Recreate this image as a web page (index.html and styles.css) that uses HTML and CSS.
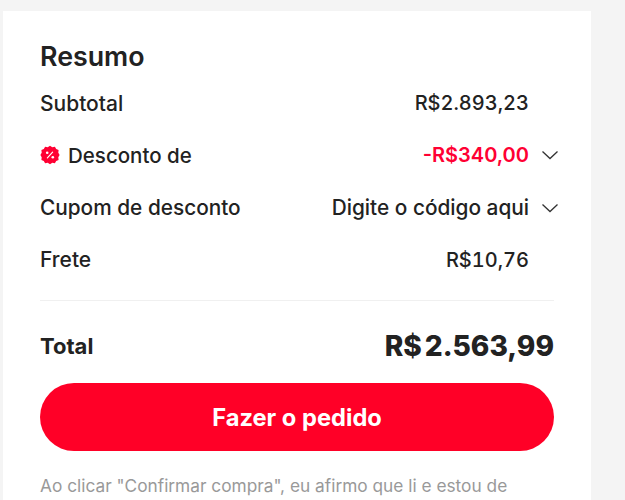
FILE: index.html
```html
<!DOCTYPE html>
<html lang="pt-BR">
<head>
    <meta charset="UTF-8">
    <meta name="viewport" content="width=device-width, initial-scale=1.0">
    <title>Resumo</title>
    <link rel="stylesheet" href="styles.css">
</head>
<body>
    <div class="summary">
        <h1 class="summary-title">Resumo</h1>
        <div class="row">
            <span class="row-label">Subtotal</span>
            <span class="row-value">R$2.893,23</span>
            <span class="row-arrow"></span>
        </div>
        <div class="row">
            <span class="row-label row-label-small">
                <svg class="badge" viewBox="0 0 20 20" width="20" height="20">
                    <path fill="#ff0033" d="M10 .8l2.3 1.4 2.6-.4 1.3 2.3 2.4 1-.3 2.7L19.6 10l-1.3 2.2.3 2.7-2.4 1-1.3 2.3-2.6-.4L10 19.2l-2.3-1.4-2.6.4-1.3-2.3-2.4-1 .3-2.7L.4 10l1.3-2.2-.3-2.7 2.4-1 1.3-2.3 2.6.4z"/>
                    <path stroke="#fff" stroke-width="1.2" fill="none" stroke-linecap="round" d="M12.6 7.2l-5.2 5.6"/>
                    <circle cx="7.2" cy="7.8" r="1.3" fill="#fff"/>
                    <circle cx="12.8" cy="12.2" r="1.3" fill="#fff"/>
                </svg>
                Desconto de
            </span>
            <span class="row-value discount">-R$340,00</span>
            <span class="row-arrow">
                <svg viewBox="0 0 18 10" width="18" height="10"><path d="M1.5 1.5L9 8.5l7.5-7" fill="none" stroke="#333" stroke-width="1.3"/></svg>
            </span>
        </div>
        <div class="row">
            <span class="row-label row-label-coupon">Cupom de desconto</span>
            <span class="row-value row-value-text">Digite o código aqui</span>
            <span class="row-arrow">
                <svg viewBox="0 0 18 10" width="18" height="10"><path d="M1.5 1.5L9 8.5l7.5-7" fill="none" stroke="#333" stroke-width="1.3"/></svg>
            </span>
        </div>
        <div class="row">
            <span class="row-label">Frete</span>
            <span class="row-value">R$10,76</span>
            <span class="row-arrow"></span>
        </div>
        <div class="total">
            <span class="total-label">Total</span>
            <span class="total-value">R$<span class="total-amount">2.563,99</span></span>
        </div>
        <button class="order-button">Fazer o pedido</button>
        <p class="terms">Ao clicar "Confirmar compra", eu afirmo que li e estou de</p>
    </div>
</body>
</html>
```

FILE: styles.css
```css
html, body {
    height: 100%;
    overflow: hidden;
}
body {
    margin: 0;
    padding: 11px 34px 0 3px;
    box-sizing: border-box;
    background-color: #f4f4f4;
    color: #222;
    font-family: 'Inter', sans-serif;
}
.summary {
    background-color: #fff;
    padding: 29px 37px 40px;
    height: 100%;
    box-sizing: border-box;
}
.summary-title {
    margin: 0 0 18px;
    font-size: 26.8px;
    line-height: 33px;
    font-weight: 600;
}
.row {
    display: flex;
    align-items: center;
    height: 52.4px;
    font-size: 20px;
    font-weight: 500;
    font-variant-numeric: tabular-nums;
}
.row:nth-child(2) {
    height: 24px;
    margin-bottom: 14px;
}
.row-label {
    display: flex;
    align-items: center;
    gap: 8px;
    font-size: 21px;
}
.row-label-small {
    font-size: 20.5px;
}
.row-label-coupon {
    font-size: 20.8px;
}
.row-value {
    margin-left: auto;
}
.row-value-text {
    font-size: 20.8px;
}
.discount {
    color: #ff0033;
    font-weight: 600;
    font-variant-numeric: normal;
}
.row-arrow {
    display: flex;
    justify-content: flex-end;
    width: 30px;
    margin-right: -5px;
}
.total {
    display: flex;
    justify-content: space-between;
    align-items: center;
    margin-top: 14px;
    padding-top: 26px;
    border-top: 1px solid #f0f0f0;
}
.total-label {
    font-size: 22px;
    font-weight: 700;
}
.total-value {
    font-size: 28.1px;
    line-height: 38px;
    font-weight: 800;
}
.total-amount {
    margin-left: 3px;
}
.order-button {
    display: block;
    width: 100%;
    height: 68px;
    margin-top: 18px;
    border: none;
    border-radius: 34px;
    background-color: #ff0027;
    color: #fff;
    font-family: inherit;
    font-size: 23.7px;
    font-weight: 700;
}
.terms {
    margin: 23px 0 0;
    color: #999;
    font-size: 17.3px;
    line-height: 24px;
}
```
